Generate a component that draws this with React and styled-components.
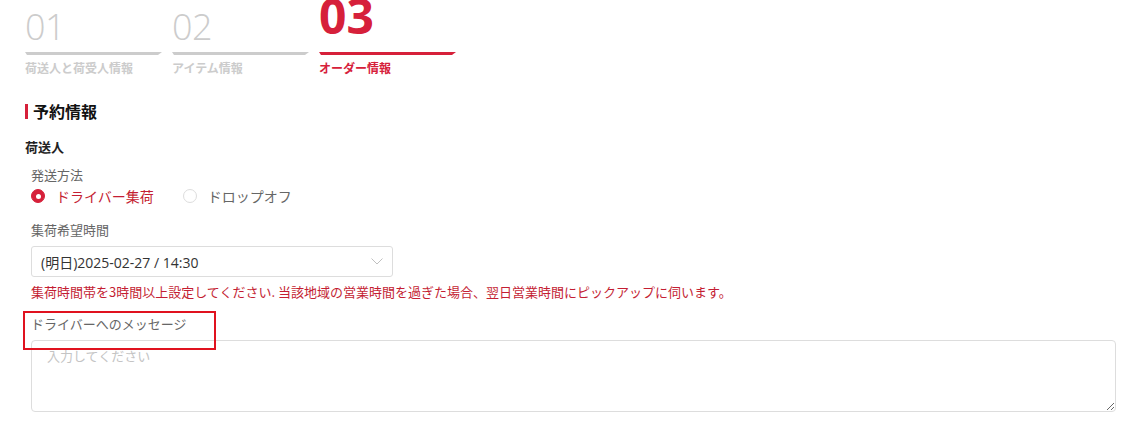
import React from "react";
import styled, { createGlobalStyle } from "styled-components";

const GlobalStyle = createGlobalStyle`
  html, body {
    margin: 0;
    padding: 0;
    background: #ffffff;
  }
  body {
    font-family: "Open Sans", "Noto Sans CJK JP", sans-serif;
    color: #333;
  }
`;

const RED = "#d6203a";

const Page = styled.div`
  width: 1124px;
  height: 430px;
  box-sizing: border-box;
  padding: 0 8px 0 25px;
  overflow: hidden;
`;

const Steps = styled.div`
  display: flex;
  gap: 10px;
`;

const Step = styled.div`
  width: 137px;
  display: flex;
  flex-direction: column;
`;

const NumberRow = styled.div`
  height: 46px;
  display: flex;
  align-items: flex-end;
`;

const StepNumber = styled.div`
  font-family: "Open Sans", sans-serif;
  font-size: ${(p) => (p.$active ? "48px" : "36px")};
  line-height: ${(p) => (p.$active ? "48px" : "36px")};
  font-weight: ${(p) => (p.$active ? 700 : 300)};
  color: ${(p) => (p.$active ? RED : "#cccccc")};
  margin-bottom: ${(p) => (p.$active ? "6px" : "1px")};
  letter-spacing: ${(p) => (p.$active ? "0" : "-0.5px")};
`;

const StepBar = styled.div`
  margin-top: 6px;
  height: 3px;
  background: ${(p) => (p.$active ? RED : "#cccccc")};
  clip-path: polygon(0 0, 100% 0, calc(100% - 4px) 100%, 2px 100%);
`;

const StepLabel = styled.div`
  margin-top: 5px;
  font-family: "Noto Sans CJK JP", sans-serif;
  font-size: 12px;
  line-height: 16px;
  font-weight: 700;
  color: ${(p) => (p.$active ? RED : "#cccccc")};
  white-space: nowrap;
`;

const SectionTitle = styled.h2`
  margin: 24px 0 0;
  display: flex;
  align-items: center;
  gap: 5px;
  font-family: "Noto Sans CJK JP", sans-serif;
  font-size: 16px;
  line-height: 22px;
  font-weight: 700;
  color: #111;
  &::before {
    content: "";
    width: 3px;
    height: 15px;
    background: ${RED};
  }
`;

const SubTitle = styled.div`
  margin-top: 15px;
  font-family: "Noto Sans CJK JP", sans-serif;
  font-size: 13px;
  line-height: 20px;
  font-weight: 700;
  color: #222;
`;

const Form = styled.div`
  padding-left: 6px;
  display: flex;
  flex-direction: column;
`;

const FieldLabel = styled.div`
  margin-top: ${(p) => p.$mt || "0px"};
  font-family: "Noto Sans CJK JP", sans-serif;
  font-size: 13px;
  line-height: 20px;
  color: #666;
  position: relative;
  align-self: flex-start;
`;

const RadioGroup = styled.div`
  display: flex;
  align-items: center;
  height: 22px;
  gap: 29px;
`;

const RadioOption = styled.label`
  display: flex;
  align-items: center;
  gap: 11px;
  font-family: "Noto Sans CJK JP", sans-serif;
  font-size: 14px;
  line-height: 22px;
  color: ${(p) => (p.$checked ? "#c41e33" : "#666")};
`;

const RadioDot = styled.span`
  width: 14px;
  height: 14px;
  box-sizing: border-box;
  border-radius: 50%;
  border: 1px solid ${(p) => (p.$checked ? RED : "#dddddd")};
  background: ${(p) => (p.$checked ? RED : "#fff")};
  display: flex;
  align-items: center;
  justify-content: center;
  &::after {
    content: "";
    width: 5px;
    height: 5px;
    border-radius: 50%;
    background: #fff;
    display: ${(p) => (p.$checked ? "block" : "none")};
  }
`;

const SelectBox = styled.div`
  margin-top: 6px;
  width: 362px;
  height: 31px;
  box-sizing: border-box;
  border: 1px solid #dddddd;
  border-radius: 3px;
  display: flex;
  align-items: center;
  justify-content: space-between;
  padding: 0 9px 0 9px;
  font-family: "Open Sans", "Noto Sans CJK JP", sans-serif;
  font-size: 14px;
  color: #333;
`;

const Hint = styled.div`
  margin-top: 5px;
  font-family: "Noto Sans CJK JP", sans-serif;
  font-size: 13px;
  line-height: 20px;
  color: #c41e33;
  white-space: nowrap;
`;

const Highlight = styled.div`
  position: absolute;
  left: -8px;
  top: -3px;
  width: 193px;
  height: 39px;
  box-sizing: border-box;
  border: 2px solid #e0121f;
  pointer-events: none;
`;

const TextArea = styled.textarea`
  margin-top: 6px;
  width: 100%;
  height: 72px;
  box-sizing: border-box;
  border: 1px solid #dddddd;
  border-radius: 4px;
  padding: 5px 15px;
  font-family: "Noto Sans CJK JP", sans-serif;
  font-size: 13px;
  line-height: 20px;
  color: #333;
  outline: none;
  &::placeholder {
    color: #c4c4c4;
  }
`;

const Chevron = () => (
  <svg width="12" height="7" viewBox="0 0 12 7" fill="none">
    <path d="M0.5 0.5L6 6L11.5 0.5" stroke="#c0c0c0" strokeWidth="1" />
  </svg>
);

const steps = [
  { num: "01", label: "荷送人と荷受人情報" },
  { num: "02", label: "アイテム情報" },
  { num: "03", label: "オーダー情報", active: true },
];

export default function App() {
  return (
    <Page>
      <GlobalStyle />
      <Steps>
        {steps.map((s) => (
          <Step key={s.num}>
            <NumberRow>
              <StepNumber $active={s.active}>{s.num}</StepNumber>
            </NumberRow>
            <StepBar $active={s.active} />
            <StepLabel $active={s.active}>{s.label}</StepLabel>
          </Step>
        ))}
      </Steps>

      <SectionTitle>予約情報</SectionTitle>
      <SubTitle>荷送人</SubTitle>

      <Form>
        <FieldLabel $mt="8px">発送方法</FieldLabel>
        <RadioGroup>
          <RadioOption $checked>
            <RadioDot $checked />
            ドライバー集荷
          </RadioOption>
          <RadioOption>
            <RadioDot />
            ドロップオフ
          </RadioOption>
        </RadioGroup>

        <FieldLabel $mt="13px">集荷希望時間</FieldLabel>
        <SelectBox>
          <span>(明日)2025-02-27 / 14:30</span>
          <Chevron />
        </SelectBox>
        <Hint>
          集荷時間帯を3時間以上設定してください. 当該地域の営業時間を過ぎた場合、翌日営業時間にピックアップに伺います。
        </Hint>

        <FieldLabel $mt="12px">
          ドライバーへのメッセージ
          <Highlight />
        </FieldLabel>
        <TextArea placeholder="入力してください" />
      </Form>
    </Page>
  );
}
